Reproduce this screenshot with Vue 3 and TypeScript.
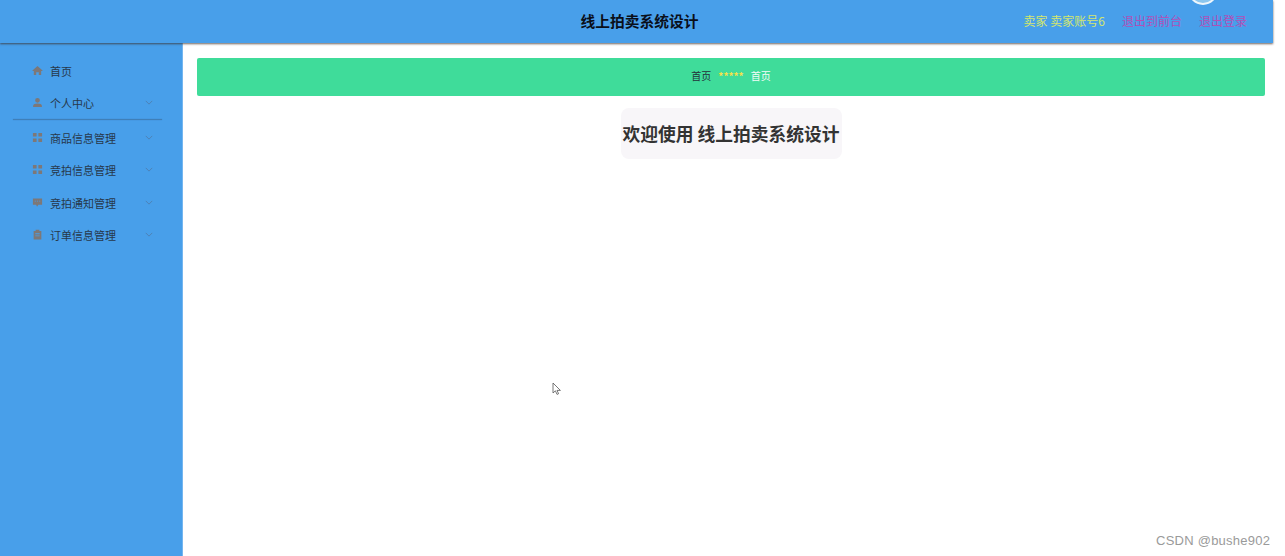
<script setup lang="ts">
interface MenuItem { label: string; icon: string; arrow: boolean; divider?: boolean }
const menu: MenuItem[] = [
  { label: '首页', icon: 'home', arrow: false },
  { label: '个人中心', icon: 'user', arrow: true, divider: true },
  { label: '商品信息管理', icon: 'grid', arrow: true },
  { label: '竞拍信息管理', icon: 'grid', arrow: true },
  { label: '竞拍通知管理', icon: 'chat', arrow: true },
  { label: '订单信息管理', icon: 'note', arrow: true },
]
</script>

<template>
  <div class="page">
    <header class="topbar">
      <h1 class="title">线上拍卖系统设计</h1>
      <div class="avatar"></div>
      <div class="actions">
        <span class="who">卖家 卖家账号6</span>
        <a class="link">退出到前台</a>
        <a class="link">退出登录</a>
      </div>
    </header>
    <div class="body">
      <aside class="side">
        <template v-for="m in menu" :key="m.label">
          <div class="item">
            <svg class="ico" viewBox="0 0 12 12">
              <path v-if="m.icon === 'home'" d="M6 1 L11.5 6 V6.6 H10 V11 H7.4 V8 H4.6 V11 H2 V6.6 H.5 V6 Z" />
              <path v-else-if="m.icon === 'user'" d="M6 1a2.6 2.6 0 1 1 0 5.2A2.6 2.6 0 0 1 6 1ZM1.2 11V9.6C1.2 8 3.5 7.2 6 7.2s4.8.8 4.8 2.4V11Z" />
              <path v-else-if="m.icon === 'grid'" d="M1 1h4v4H1ZM7 1h4v4H7ZM1 7h4v4H1ZM7 7h4v4H7Z" />
              <path v-else-if="m.icon === 'chat'" d="M1 1.5h10v7H7L5.5 10.5 4.5 8.5H1ZM3 4v1h1.2V4ZM5.4 4v1h1.2V4ZM7.8 4v1H9V4Z" fill-rule="evenodd" />
              <path v-else d="M4 .8h4v1.4h2.2V11.4H1.8V2.2H4ZM3.6 4.6v1h4.8v-1ZM3.6 7v1h4.8V7Z" fill-rule="evenodd" />
            </svg>
            <span class="label">{{ m.label }}</span>
            <svg v-if="m.arrow" class="arrow" viewBox="0 0 10 6"><path d="M1 1l4 4 4-4" /></svg>
          </div>
          <div v-if="m.divider" class="divider"></div>
        </template>
      </aside>
      <main class="main">
        <div class="crumbs">
          <span class="c-dark">首页</span>
          <span class="c-stars">*****</span>
          <span class="c-light">首页</span>
        </div>
        <div class="welcome-row">
          <div class="welcome">欢迎使用 线上拍卖系统设计</div>
        </div>
      </main>
    </div>
    <svg class="cursor" viewBox="0 0 10 14"><path d="M1 1v10l2.4-2.2L5 12.4l1.6-.7L5 8.4h3.4Z" /></svg>
    <div class="mark">CSDN @bushe902</div>
  </div>
</template>

<style>
html, body { margin: 0; background: #fff; }
</style>

<style scoped>
.page {
  position: relative;
  width: 1285px;
  height: 556px;
  overflow: hidden;
  background: #fff;
  font-family: "Noto Sans CJK SC", "Noto Sans", sans-serif;
}
.topbar {
  position: relative;
  z-index: 2;
  width: 1273px;
  height: 43px;
  background: #489fea;
  box-shadow: 0 1px 2px rgba(60, 45, 40, .75);
}
.title {
  margin: 0;
  text-align: center;
  padding: 12px 0 0 6px;
  font-size: 14.75px;
  line-height: 18px;
  font-weight: 700;
  color: #0a0f1a;
}
.avatar {
  position: absolute;
  left: 1188px;
  top: -25px;
  width: 30px;
  height: 30px;
  box-sizing: border-box;
  border-radius: 50%;
  background: #8cc6ee;
  border: 2px solid #eef6fc;
}
.actions {
  position: absolute;
  right: 26px;
  top: 12px;
  display: flex;
  gap: 17px;
  font-size: 12px;
  line-height: 17px;
}
.who { color: #d3e66e; }
.link { color: #b050b8; }
.body { display: flex; height: 513px; }
.side {
  width: 183px;
  flex: none;
  box-sizing: border-box;
  padding-top: 11.5px;
  background: #489fea;
  border-right: 1px solid #74b6f0;
}
.item {
  display: flex;
  align-items: center;
  height: 32.4px;
  padding-left: 32px;
  font-size: 11px;
  color: #27384a;
}
.ico { width: 11px; height: 11px; margin: -1px 7px 0 0; fill: #7d7878; flex: none; }
.label { width: 92px; }
.arrow { width: 8px; height: 5px; margin: -1px 0 0 3px; fill: none; stroke: #4f7fb0; stroke-width: 1.1; }
.divider {
  height: 1px;
  margin: 0 20px 1.5px 13px;
  background: #3f7fb8;
  box-shadow: 0 0 1px rgba(40, 70, 110, .5);
}
.main { flex: 1; padding: 15px 20px 0 14px; min-width: 0; }
.crumbs {
  height: 38px;
  box-sizing: border-box;
  padding-bottom: 3px;
  border-radius: 2px;
  background: #3fdc9a;
  display: flex;
  align-items: center;
  justify-content: center;
  gap: 7px;
  font-size: 10px;
}
.c-dark { color: #24323a; }
.c-stars { color: #f3e24a; font-weight: 700; }
.c-light { color: #f4fbf8; }
.welcome-row { display: flex; justify-content: center; margin-top: 12px; }
.welcome {
  width: 221px;
  height: 51px;
  border-radius: 8px;
  background: #f8f6f9;
  text-align: center;
  font-size: 17.75px;
  line-height: 51px;
  font-weight: 700;
  color: #333;
  white-space: nowrap;
}
.cursor {
  position: absolute;
  left: 552px;
  top: 382px;
  width: 10px;
  height: 14px;
  fill: #fff;
  stroke: #555;
  stroke-width: .8;
}
.mark {
  position: absolute;
  left: 1156px;
  top: 532px;
  font-family: "Liberation Sans", sans-serif;
  font-size: 13px;
  line-height: 18px;
  letter-spacing: .25px;
  color: #9a9a9a;
}
</style>
